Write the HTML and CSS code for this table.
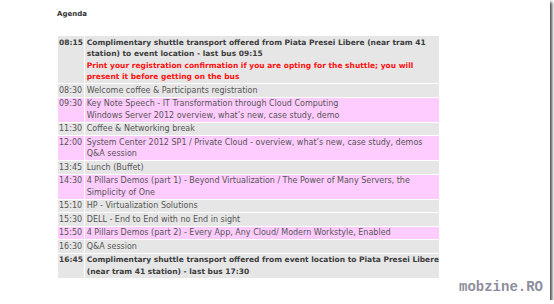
FILE: index.html
```html
<!DOCTYPE html>
<html>
<head>
<meta charset="utf-8">
<link rel="stylesheet" href="styles.css">
</head>
<body>
<div class="frame">
  <h2 class="title">Agenda</h2>
  <table class="agenda">
    <tr class="gray strong">
      <td class="time">08:15</td>
      <td class="desc">Complimentary shuttle transport offered from Piata Presei Libere (near tram 41<br>station) to event location - last bus 09:15<br><span class="red">Print your registration confirmation if you are opting for the shuttle; you will<br>present it before getting on the bus</span></td>
    </tr>
    <tr class="gray">
      <td class="time">08:30</td>
      <td class="desc">Welcome coffee &amp; Participants registration</td>
    </tr>
    <tr class="pink">
      <td class="time">09:30</td>
      <td class="desc">Key Note Speech - IT Transformation through Cloud Computing<br>Windows Server 2012 overview, what’s new, case study, demo</td>
    </tr>
    <tr class="gray">
      <td class="time">11:30</td>
      <td class="desc">Coffee &amp; Networking break</td>
    </tr>
    <tr class="pink">
      <td class="time">12:00</td>
      <td class="desc">System Center 2012 SP1 / Private Cloud - overview, what’s new, case study, demos<br>Q&amp;A session</td>
    </tr>
    <tr class="gray">
      <td class="time">13:45</td>
      <td class="desc">Lunch (Buffet)</td>
    </tr>
    <tr class="pink">
      <td class="time">14:30</td>
      <td class="desc">4 Pillars Demos (part 1) - Beyond Virtualization / The Power of Many Servers, the<br>Simplicity of One</td>
    </tr>
    <tr class="gray">
      <td class="time">15:10</td>
      <td class="desc">HP - Virtualization Solutions</td>
    </tr>
    <tr class="gray">
      <td class="time">15:30</td>
      <td class="desc">DELL - End to End with no End in sight</td>
    </tr>
    <tr class="pink">
      <td class="time">15:50</td>
      <td class="desc">4 Pillars Demos (part 2) - Every App, Any Cloud/ Modern Workstyle, Enabled</td>
    </tr>
    <tr class="gray">
      <td class="time">16:30</td>
      <td class="desc">Q&amp;A session</td>
    </tr>
    <tr class="gray strong">
      <td class="time">16:45</td>
      <td class="desc">Complimentary shuttle transport offered from event location to Piata Presei Libere<br>(near tram 41 station) - last bus 17:30</td>
    </tr>
  </table>
  <div class="watermark">mobzine.RO</div>
</div>
</body>
</html>
```
FILE: styles.css
```css
html, body {
  margin: 0;
  padding: 0;
  background: #ffffff;
}

.frame {
  position: relative;
  width: 550px;
  height: 300px;
  box-sizing: border-box;
  padding: 10px 0 0 57px;
  background: #ffffff;
  box-shadow: 2px 2px 3px rgba(0, 0, 0, 0.75);
  font-family: "DejaVu Sans", Verdana, sans-serif;
}

.title {
  margin: 0;
  font-size: 7px;
  line-height: 9px;
  font-weight: bold;
  color: #333333;
}

.agenda {
  margin-top: 16px;
  width: 383px;
  border-collapse: separate;
  border-spacing: 1px;
  font-size: 8px;
  line-height: 11.5px;
  color: #555555;
}

.agenda td {
  padding: 0.5px 0;
  vertical-align: top;
  white-space: nowrap;
}

.agenda .time {
  width: 27px;
  padding-left: 1px;
}

.agenda .desc {
  padding-left: 2px;
}

.gray td {
  background: #e6e6e6;
}

.pink td {
  background: #ffccff;
}

.agenda .strong td {
  font-size: 7.5px;
  font-weight: bold;
  color: #3c3c3c;
}

.red {
  color: #ff1010;
}

.watermark {
  position: absolute;
  right: 7px;
  bottom: 6px;
  font-family: "Liberation Mono", monospace;
  font-weight: bold;
  font-size: 14px;
  line-height: 14px;
  color: #8e8e9c;
  text-shadow: 0 0 1px #ffffff;
}
```
